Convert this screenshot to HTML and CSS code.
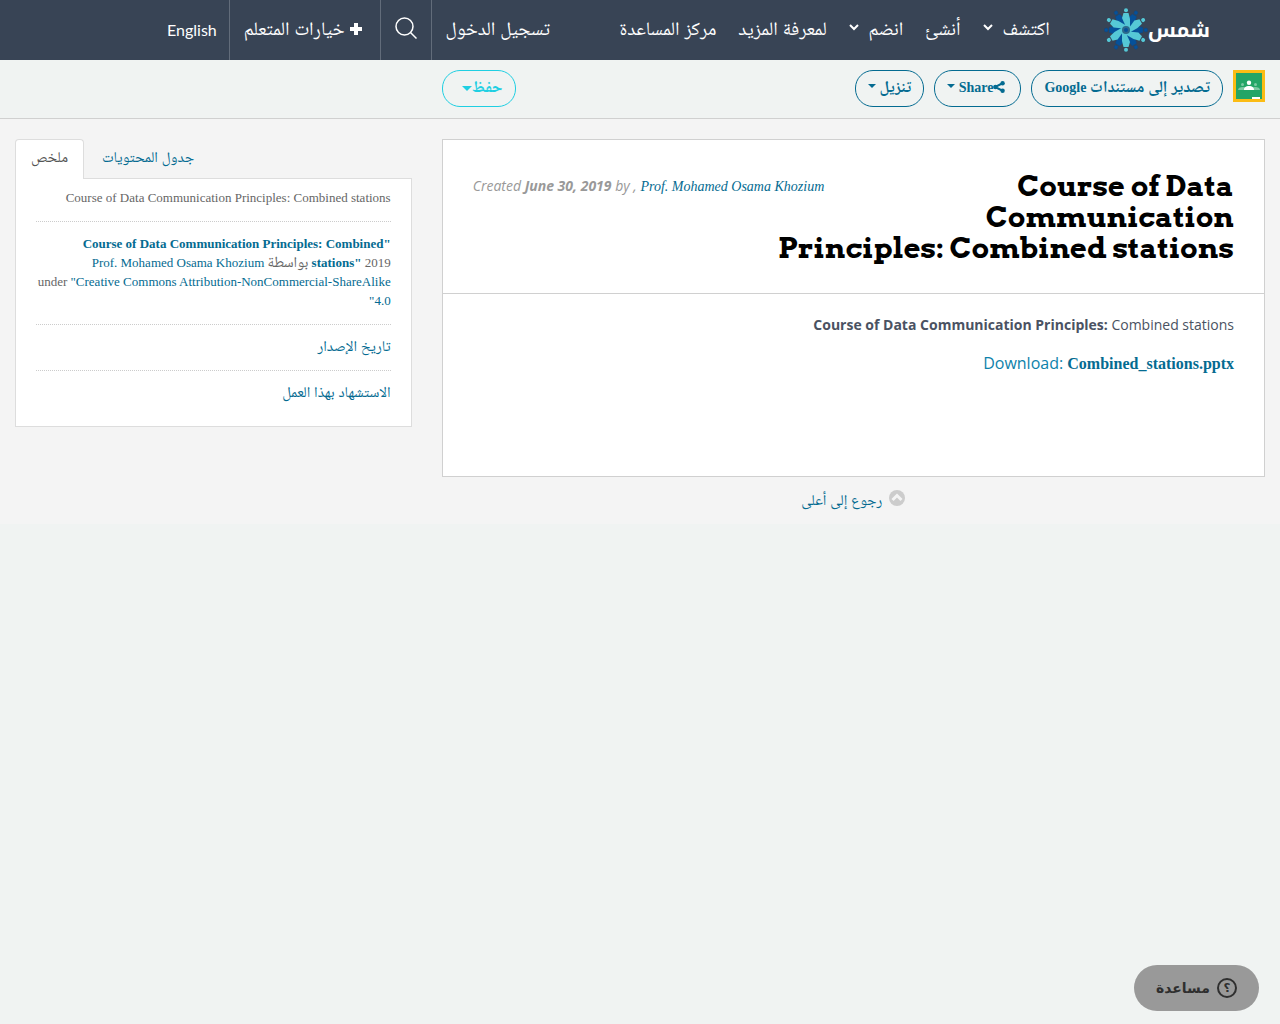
FILE: index.html
```html
<!DOCTYPE html>
<html lang="ar" dir="rtl">
<head>
    <meta charset="UTF-8">
    <meta name="viewport" content="width=device-width, initial-scale=1.0">
    <title>Course of Data Communication Principles: Combined stations</title>
    <link rel="stylesheet" href="styles.css">
</head>
<body>
    <header class="topbar">
        <a class="logo" href="#">
            <span class="logo-text">شمس</span>
            <svg class="logo-mark" viewBox="-22 -22 44 44" aria-hidden="true">
                <defs>
                    <g id="ray">
                        <path d="M4 -1L0 -3L-4 -12L-2.500 -17H2.500L4 -11L4 -4z"/>
                        <circle cy="-19.800" r="2"/>
                    </g>
                </defs>
                <g fill="#05519a" stroke="#1d4470" stroke-width="0.500">
                    <use href="#ray" transform="rotate(30)"/>
                    <use href="#ray" transform="rotate(90)"/>
                    <use href="#ray" transform="rotate(150)"/>
                    <use href="#ray" transform="rotate(210)"/>
                    <use href="#ray" transform="rotate(270)"/>
                    <use href="#ray" transform="rotate(330)"/>
                </g>
                <g fill="#55c8d6">
                    <use href="#ray"/>
                    <use href="#ray" transform="rotate(60)"/>
                    <use href="#ray" transform="rotate(120)"/>
                    <use href="#ray" transform="rotate(180)"/>
                    <use href="#ray" transform="rotate(240)"/>
                    <use href="#ray" transform="rotate(300)"/>
                </g>
                <circle r="4" fill="#2c6a8c"/>
                <circle r="2" fill="#05519a"/>
            </svg>
        </a>
        <nav class="main-nav">
            <a href="#">اكتشف <svg class="chevron" viewBox="0 0 10 7"><path d="M1 1l4 4 4-4"/></svg></a>
            <a href="#">أنشئ</a>
            <a href="#">انضم <svg class="chevron" viewBox="0 0 10 7"><path d="M1 1l4 4 4-4"/></svg></a>
            <a href="#">لمعرفة المزيد</a>
            <a href="#">مركز المساعدة</a>
        </nav>
        <div class="user-nav">
            <a href="#">تسجيل الدخول</a>
            <button class="search" type="button" aria-label="بحث">
                <svg viewBox="0 0 22 22"><circle cx="9.500" cy="9.500" r="8.500"/><path d="M15.500 15.500l6 6"/></svg>
            </button>
            <a class="options" href="#"><svg class="plus" viewBox="0 0 12 12"><path d="M4 0h4v4h4v4H8v4H4V8H0V4h4z"/></svg> خيارات المتعلم</a>
            <a class="lang" href="#" lang="en">English</a>
        </div>
    </header>

    <div class="toolbar">
        <div class="tools">
            <a class="classroom" href="#" aria-label="Google Classroom">
                <svg viewBox="0 0 32 32">
                    <path fill="#fbbc14" d="M0 0h32v32H0z"/>
                    <path fill="#23a566" d="M3 3h26v26H3z"/>
                    <g fill="#7cc9a2">
                        <circle cx="9.500" cy="14.500" r="1.500"/>
                        <circle cx="22.500" cy="14.500" r="1.500"/>
                        <path d="M5 20c0-2 2-3 5-3s4 1 5 3zM17 20c1-2 2-3 5-3s5 1 5 3z"/>
                    </g>
                    <g fill="#fff">
                        <circle cx="16" cy="12.800" r="2.200"/>
                        <path d="M11 20c0-3 2-4 5-4s5 1 5 4zM19 27h8v2h-8z"/>
                    </g>
                </svg>
            </a>
            <button class="btn" type="button"><span class="ar">تصدير إلى مستندات</span> Google</button>
            <button class="btn share" type="button"><svg class="share-icon" viewBox="0 0 12 12"><path d="M10 2L2 6l8 4"/><circle cx="9.600" cy="2.300" r="2.200"/><circle cx="2.400" cy="6" r="2.200"/><circle cx="9.600" cy="9.700" r="2.200"/></svg>Share <span class="caret"></span></button>
            <button class="btn" type="button"><span class="ar">تنزيل</span> <span class="caret"></span></button>
        </div>
        <button class="btn save" type="button"><span class="ar">حفظ</span><span class="caret low"></span></button>
    </div>

    <div class="page">
        <main class="content">
            <article class="card">
                <div class="card-head">
                    <p class="byline" dir="ltr">Created <b>June 30, 2019</b> by , <a href="#">Prof. Mohamed Osama Khozium</a></p>
                    <h1>Course of Data Communication Principles: Combined stations</h1>
                </div>
                <div class="card-body">
                    <p dir="ltr"><b>Course of Data Communication Principles:</b> Combined stations</p>
                    <p class="download" dir="ltr"><span>Download:</span> <a href="#">Combined_stations.pptx</a></p>
                </div>
            </article>
            <a class="to-top ar" href="#">
                <svg viewBox="0 0 16 16"><circle cx="8" cy="8" r="8"/><path d="M3.500 10L8 5.500l4.500 4.500"/></svg>
                رجوع إلى أعلى
            </a>
        </main>

        <aside class="sidebar">
            <div class="tabs">
                <a class="ar" href="#">جدول المحتويات</a>
                <a class="ar active" href="#">ملخص</a>
            </div>
            <ul class="summary">
                <li>Course of Data Communication Principles: Combined stations</li>
                <li><a href="#"><b>"Course of Data Communication Principles: Combined stations"</b></a> 2019 <span class="ar">بواسطة</span> <a href="#">Prof. Mohamed Osama Khozium</a> under&nbsp;<a href="#">"Creative Commons Attribution-NonCommercial-ShareAlike 4.0"</a></li>
                <li><a class="ar" href="#">تاريخ الإصدار</a></li>
                <li><a class="ar" href="#">الاستشهاد بهذا العمل</a></li>
            </ul>
        </aside>
    </div>

    <button class="help" type="button"><span class="help-icon">؟</span>مساعدة</button>
</body>
</html>
```
FILE: styles.css
```css
* {
    box-sizing: border-box;
}

body {
    margin: 0;
    background: #f0f3f2;
    color: #666;
    font-family: "Liberation Serif", "Noto Naskh Arabic", serif;
    font-size: 14px;
}

a {
    color: #046b91;
    text-decoration: none;
}

button {
    font-family: inherit;
    cursor: pointer;
}

/* the naskh letters run small next to the latin ones */
.ar {
    font-size: 15px;
}

.btn .ar {
    font-size: 16px;
}

.topbar {
    display: flex;
    height: 60px;
    padding: 0 70px 0 167px;
    background: #384455;
}

.topbar a {
    color: #fff;
}

.logo {
    display: flex;
    align-items: center;
    margin-left: 43px;
}

.logo-text {
    font-family: "Noto Kufi Arabic", "DejaVu Sans", sans-serif;
    font-size: 20px;
    font-weight: bold;
    line-height: 40px;
}

.logo-mark {
    width: 44px;
    height: 44px;
}

.main-nav,
.user-nav {
    display: flex;
    font-family: Lato, "Noto Naskh Arabic", sans-serif;
    font-size: 19px;
    line-height: 56px;
}

.main-nav a {
    padding: 0 11px;
}

.chevron {
    width: 10px;
    height: 7px;
    margin-right: 5px;
    vertical-align: 4px;
    fill: none;
    stroke: #fff;
    stroke-width: 2;
}

.user-nav {
    margin-right: auto;
}

.user-nav > * {
    padding: 0 14px;
    border: 0;
    border-left: 1px solid #626c7a;
}

.search {
    background: none;
    line-height: 0;
}

.search svg {
    width: 22px;
    height: 22px;
    margin-bottom: 4px;
    fill: none;
    stroke: #fff;
    stroke-width: 1.500;
}

.user-nav .options {
    padding-right: 18px;
}

.plus {
    width: 12px;
    height: 12px;
    fill: #fff;
}

.user-nav .lang {
    padding: 0 12px 0 0;
    border-left: 0;
    font-size: 16px;
    line-height: 60px;
}

.toolbar {
    display: flex;
    justify-content: space-between;
    padding: 10px 15px 11px 442px;
    border-bottom: 1px solid #d0d0d0;
}

.tools {
    display: flex;
    gap: 10px;
}

.classroom svg {
    display: block;
    width: 32px;
    height: 32px;
}

.btn {
    height: 37px;
    padding: 0 12px 2px;
    border: 1px solid #046b91;
    border-radius: 18px;
    background: none;
    color: #046b91;
    font-size: 14px;
    font-weight: bold;
    line-height: 20px;
}

.share {
    padding-right: 15px;
}

.share-icon {
    width: 12px;
    height: 12px;
    vertical-align: -1px;
    fill: #046b91;
}

.share-icon path {
    fill: none;
    stroke: #046b91;
    stroke-width: 2;
}

.caret {
    display: inline-block;
    border: 4px solid transparent;
    border-top-color: currentColor;
    border-bottom: 0;
    vertical-align: 4px;
}

.low {
    border-width: 5px 5px 0;
    vertical-align: 1px;
}

.save {
    padding: 0 13px 2px 19px;
    border-color: #1fcfe2;
    color: #1fcfe2;
}

.page {
    display: grid;
    grid-template-columns: 2fr 1fr;
    align-items: start;
    background: #f4f4f4;
}

.content,
.sidebar {
    padding: 20px 15px 0;
}

.card {
    min-height: 338px;
    border: 1px solid #d0d0d0;
    background: #fff;
}

.card-head {
    padding: 30px;
    border-bottom: 1px solid #d0d0d0;
}

h1 {
    margin: 0;
    color: #000;
    font-family: Arvo, "DejaVu Serif", serif;
    font-size: 29px;
    line-height: 31px;
}

/* the title wraps round the byline */
.byline {
    float: left;
    margin: 6px 0 20px;
    color: #999;
    font-family: "Open Sans", sans-serif;
    font-style: italic;
    line-height: 20px;
}

.byline a,
.download a {
    font-family: "Liberation Serif", serif;
}

.card-body {
    padding: 20px 30px;
    color: #4a5262;
    font-family: "Open Sans", sans-serif;
}

.card-body p {
    margin: 0 0 16px;
    line-height: 22px;
    text-align: right;
}

.card-body .download {
    color: #0d82ab;
    font-size: 16px;
}

.download a {
    font-weight: bold;
}

.to-top {
    display: flex;
    justify-content: center;
    gap: 7px;
    height: 47px;
    padding-top: 13px;
    line-height: 20px;
}

.to-top svg {
    width: 16px;
    height: 16px;
    fill: #ccc;
}

.to-top path {
    fill: none;
    stroke: #f4f4f4;
    stroke-width: 3;
}

.tabs {
    display: flex;
    justify-content: flex-end;
    gap: 2px;
}

.tabs a {
    height: 40px;
    margin-bottom: -1px;
    padding: 0 15px;
    border: 1px solid transparent;
    border-bottom: 0;
    border-radius: 4px 4px 0 0;
    line-height: 34px;
}

.tabs .active {
    z-index: 1;
    border-color: #ddd;
    background: #fff;
    color: #555;
}

.summary {
    margin: 0;
    padding: 9px 20px 10px;
    border: 1px solid #ddd;
    background: #fff;
    font-size: 13px;
    line-height: 19px;
    list-style: none;
}

.summary li {
    padding: 12px 0 14px;
}

.summary li:first-child {
    padding-top: 0;
}

.summary li + li {
    border-top: 1px dotted #ccc;
}

.summary .ar {
    line-height: 16px;
}

.help {
    position: fixed;
    right: 21px;
    bottom: 13px;
    display: flex;
    align-items: center;
    gap: 7px;
    height: 46px;
    padding: 0 22px;
    border: 0;
    border-radius: 23px;
    background: #999;
    color: #2f2f2f;
    font-family: "DejaVu Sans", sans-serif;
    font-size: 14px;
    font-weight: bold;
}

.help-icon {
    width: 20px;
    height: 20px;
    border: 2px solid #2f2f2f;
    border-radius: 50%;
    font-size: 12px;
    line-height: 16px;
}
```
